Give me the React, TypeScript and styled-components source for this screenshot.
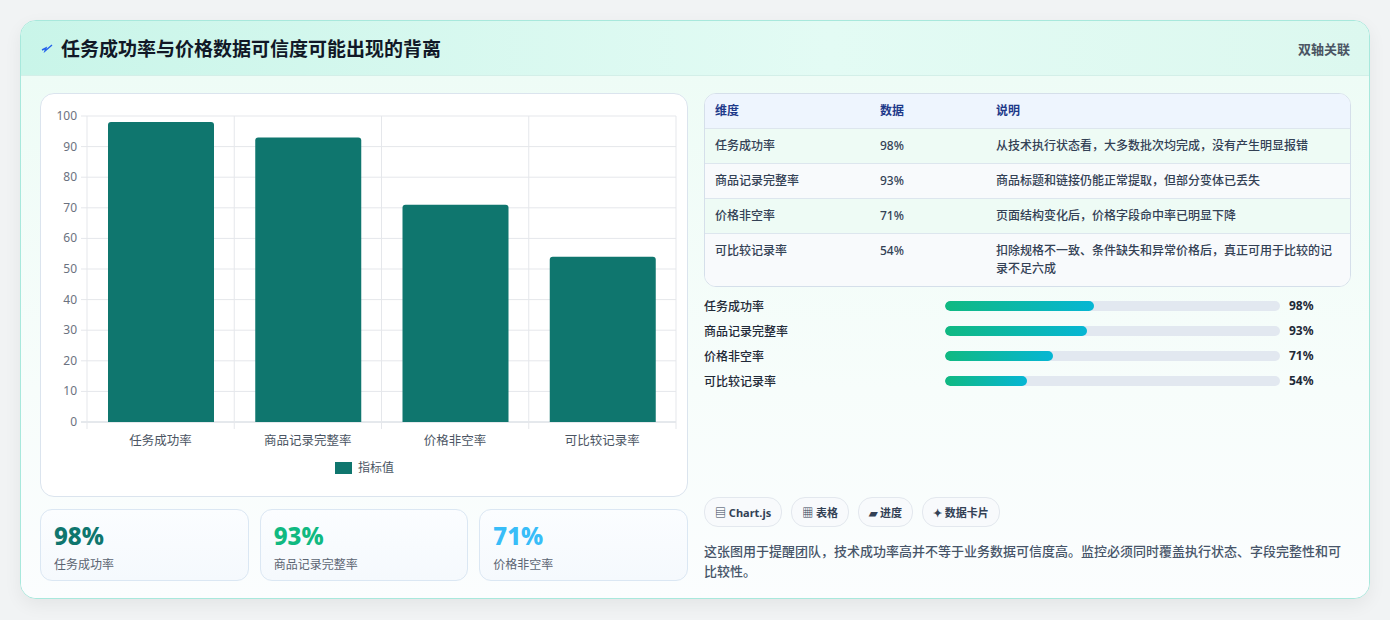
import React from "react";
import styled, { createGlobalStyle } from "styled-components";

const Global = createGlobalStyle`
  body { margin: 0; background: #f1f3f4; font-family: "Noto Sans", "Noto Sans CJK SC", sans-serif; }
`;

const Page = styled.div`
  padding: 20px 20px 21px 20px;
`;
const Card = styled.div`
  border: 1px solid #a8e8dc;
  border-radius: 16px;
  background: #fff;
  overflow: hidden;
  box-shadow: 0 6px 18px rgba(0,0,0,0.06);
`;
const Header = styled.div`
  height: 54px;
  display: flex;
  align-items: center;
  justify-content: space-between;
  padding: 0 19px 0 20px;
  background: linear-gradient(90deg, #c9f5e9, #e3fbf4 60%, #dcf8ef);
  border-bottom: 1px solid #d3efe8;
`;
const Title = styled.h1`
  margin: 0;
  font-size: 19px;
  font-weight: 700;
  color: #111827;
  display: flex;
  align-items: center;
  gap: 8px;
`;
const Tag = styled.span`
  font-size: 13px;
  font-weight: 600;
  color: #4b5563;
`;
const Body = styled.div`
  display: grid;
  grid-template-columns: 648px 647px;
  gap: 16px;
  padding: 17px 18px 17px 19px;
  background: linear-gradient(180deg, #eefcf6 0%, #f7fdfb 60%, #fbfdfe 100%);
`;
const Col = styled.div`
  display: flex;
  flex-direction: column;
  gap: 12px;
`;
const ChartPanel = styled.div`
  height: 402px;
  border: 1px solid #dbe4ee;
  border-radius: 14px;
  background: #fff;
`;
const Stats = styled.div`
  display: grid;
  grid-template-columns: repeat(3, 1fr);
  gap: 11px;
`;
const Stat = styled.div`
  height: 72px;
  box-sizing: border-box;
  border: 1px solid #dbe7f3;
  border-radius: 12px;
  background: linear-gradient(180deg, #fbfdff, #f5f9fd);
  padding: 11px 13px;
`;
const StatVal = styled.div<{ $c: string }>`
  font-size: 24px;
  font-weight: 800;
  color: ${p => p.$c};
  line-height: 30px;
`;
const StatLabel = styled.div`
  font-size: 12px;
  color: #5b6472;
  margin-top: 4px;
`;
const Table = styled.div`
  border: 1px solid #d5dfea;
  border-radius: 12px;
  overflow: hidden;
  background: #fff;
`;
const Row = styled.div<{ $head?: boolean; $alt?: boolean }>`
  display: grid;
  grid-template-columns: 165px 116px 1fr;
  padding: 8px 10px;
  min-height: ${p => (p.$head ? 16 : 18)}px;
  background: ${p => (p.$head ? "#eef5fe" : p.$alt ? "#f8fafc" : "#eefbf5")};
  border-top: ${p => (p.$head ? "none" : "1px solid #dde6ee")};
  font-size: 12px;
  line-height: 18px;
  color: ${p => (p.$head ? "#1e3a8a" : "#334155")};
  font-weight: ${p => (p.$head ? 700 : 500)};
  & > span:last-child { padding-right: 8px; }
`;
const Bars = styled.div`
  display: flex;
  flex-direction: column;
  gap: 6px;
  margin-top: -3px;
`;
const BarRow = styled.div`
  display: grid;
  grid-template-columns: 241px 335px 1fr;
  align-items: center;
  gap: 0;
  height: 19px;
  font-size: 12px;
  color: #1f2937;
  font-weight: 500;
`;
const Track = styled.div`
  height: 10px;
  border-radius: 5px;
  background: #e2e8f0;
  overflow: hidden;
`;
const Fill = styled.div`
  height: 100%;
  border-radius: 5px;
  background: linear-gradient(90deg, #10b981, #06b6d4);
`;
const Pct = styled.span`
  padding-left: 9px;
  font-weight: 700;
`;
const Spacer = styled.div`
  flex: 1;
`;
const Chips = styled.div`
  display: flex;
  gap: 9px;
`;
const Chip = styled.span`
  height: 28px;
  padding: 0 10px;
  border-radius: 14px;
  border: 1px solid #e3e8ee;
  background: #f8fafc;
  font-size: 11px;
  font-weight: 700;
  color: #334155;
  display: inline-flex;
  align-items: center;
  gap: 3px;
`;
const Note = styled.p`
  margin: 2px 0 0;
  font-size: 13px;
  line-height: 20px;
  color: #475569;
  font-weight: 500;
`;

const data = [
  { name: "任务成功率", v: 98, note: "从技术执行状态看，大多数批次均完成，没有产生明显报错" },
  { name: "商品记录完整率", v: 93, note: "商品标题和链接仍能正常提取，但部分变体已丢失" },
  { name: "价格非空率", v: 71, note: "页面结构变化后，价格字段命中率已明显下降" },
  { name: "可比较记录率", v: 54, note: "扣除规格不一致、条件缺失和异常价格后，真正可用于比较的记录不足六成" },
];

function Chart() {
  const x0 = 46, x1 = 635, y0 = 328, yTop = 22;
  const h = y0 - yTop;
  const cw = (x1 - x0) / 4;
  const ticks = [0, 10, 20, 30, 40, 50, 60, 70, 80, 90, 100];
  return (
    <svg width="648" height="402" viewBox="0 0 648 402" style={{ display: "block" }}>
      {ticks.map(t => {
        const y = y0 - (t / 100) * h;
        return (
          <g key={t}>
            <line x1={x0 - 6} x2={x1} y1={y} y2={y} stroke={t === 0 ? "#cbd2da" : "#e5e7eb"} />
            <text x={x0 - 10} y={y + 4} textAnchor="end" fontSize="12" fill="#6b7280" fontFamily="Noto Sans">{t}</text>
          </g>
        );
      })}
      {[0, 1, 2, 3, 4].map(i => (
        <line key={i} x1={x0 + i * cw} x2={x0 + i * cw} y1={yTop} y2={y0 + 7} stroke="#e5e7eb" />
      ))}
      {data.map((d, i) => {
        const bh = (d.v / 100) * h;
        const bx = x0 + i * cw + 21;
        return (
          <g key={d.name}>
            <path d={`M${bx} ${y0}V${y0 - bh + 3}q0 -3 3 -3h100q3 0 3 3V${y0}Z`} fill="#0f766e" />
            <text x={x0 + i * cw + cw / 2} y={y0 + 23} textAnchor="middle" fontSize="12.5" fill="#4b5563" fontFamily="Noto Sans CJK SC">{d.name}</text>
          </g>
        );
      })}
      <rect x="294" y="368" width="17" height="12" fill="#0f766e" />
      <text x="317" y="378" fontSize="12" fill="#4b5563" fontFamily="Noto Sans CJK SC">指标值</text>
    </svg>
  );
}

export default function App() {
  return (
    <Page>
      <Global />
      <Card>
        <Header>
          <Title>
            <svg width="12" height="10" viewBox="0 0 12 10"><path d="M1 7l4-2-1 3 7-6" stroke="#2563eb" strokeWidth="1.4" fill="none" /></svg>
            任务成功率与价格数据可信度可能出现的背离
          </Title>
          <Tag>双轴关联</Tag>
        </Header>
        <Body>
          <Col>
            <ChartPanel><Chart /></ChartPanel>
            <Stats>
              <Stat><StatVal $c="#0f766e">98%</StatVal><StatLabel>任务成功率</StatLabel></Stat>
              <Stat><StatVal $c="#10b981">93%</StatVal><StatLabel>商品记录完整率</StatLabel></Stat>
              <Stat><StatVal $c="#38bdf8">71%</StatVal><StatLabel>价格非空率</StatLabel></Stat>
            </Stats>
          </Col>
          <Col>
            <Table>
              <Row $head><span>维度</span><span>数据</span><span>说明</span></Row>
              {data.map((d, i) => (
                <Row key={d.name} $alt={i % 2 === 1}><span>{d.name}</span><span>{d.v}%</span><span>{d.note}</span></Row>
              ))}
            </Table>
            <Bars>
              {data.map(d => (
                <BarRow key={d.name}>
                  <span>{d.name}</span>
                  <Track><Fill style={{ width: `${d.v * 0.455}%` }} /></Track>
                  <Pct>{d.v}%</Pct>
                </BarRow>
              ))}
            </Bars>
            <Spacer />
            <Chips>
              <Chip>▤ Chart.js</Chip>
              <Chip>▦ 表格</Chip>
              <Chip>▰ 进度</Chip>
              <Chip>✦ 数据卡片</Chip>
            </Chips>
            <Note>这张图用于提醒团队，技术成功率高并不等于业务数据可信度高。监控必须同时覆盖执行状态、字段完整性和可比较性。</Note>
          </Col>
        </Body>
      </Card>
    </Page>
  );
}
